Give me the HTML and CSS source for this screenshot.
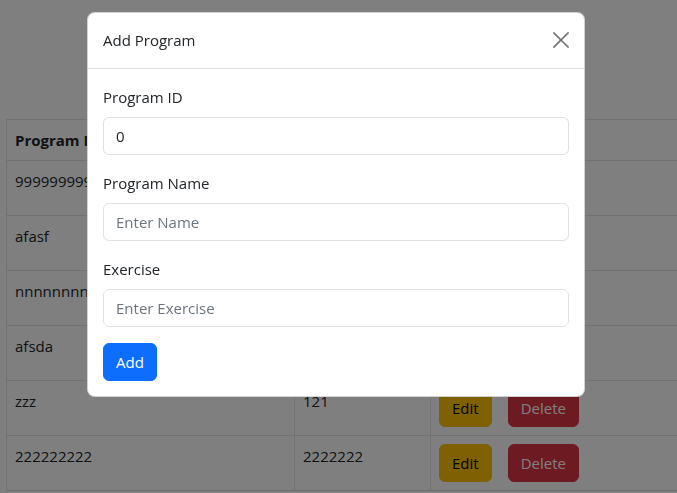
FILE: index.html
```html
<!DOCTYPE html>
<html lang="en">
<head>
<meta charset="utf-8">
<title>Programs</title>
<link rel="stylesheet" href="styles.css">
</head>
<body>
<main class="page">
  <table class="programs">
    <colgroup>
      <col class="c-name">
      <col class="c-ex">
      <col class="c-act">
    </colgroup>
    <thead>
      <tr><th>Program Name</th><th>Exercise</th><th>Actions</th></tr>
    </thead>
    <tbody>
      <tr><td>999999999</td><td>99999</td><td><div class="actions"><button class="btn btn-warning">Edit</button><button class="btn btn-danger">Delete</button></div></td></tr>
      <tr><td>afasf</td><td>asfasf</td><td><div class="actions"><button class="btn btn-warning">Edit</button><button class="btn btn-danger">Delete</button></div></td></tr>
      <tr><td>nnnnnnnnn</td><td>nnnnn</td><td><div class="actions"><button class="btn btn-warning">Edit</button><button class="btn btn-danger">Delete</button></div></td></tr>
      <tr><td>afsda</td><td>asdf</td><td><div class="actions"><button class="btn btn-warning">Edit</button><button class="btn btn-danger">Delete</button></div></td></tr>
      <tr><td>zzz</td><td>121</td><td><div class="actions"><button class="btn btn-warning">Edit</button><button class="btn btn-danger">Delete</button></div></td></tr>
      <tr><td>222222222</td><td>2222222</td><td><div class="actions"><button class="btn btn-warning">Edit</button><button class="btn btn-danger">Delete</button></div></td></tr>
    </tbody>
  </table>
</main>

<div class="backdrop"></div>

<div class="modal" role="dialog" aria-labelledby="modal-title">
  <div class="modal-header">
    <h5 class="modal-title" id="modal-title">Add Program</h5>
    <button class="btn-close" aria-label="Close">
      <svg width="16" height="16" viewBox="0 0 16 16" aria-hidden="true"><path d="M1 1 L15 15 M15 1 L1 15" stroke="currentColor" stroke-width="1.6" stroke-linecap="square" fill="none"/></svg>
    </button>
  </div>
  <form class="modal-body">
    <div class="field">
      <label class="form-label" for="pid">Program ID</label>
      <input class="form-control" id="pid" type="text" value="0">
    </div>
    <div class="field">
      <label class="form-label" for="pname">Program Name</label>
      <input class="form-control" id="pname" type="text" placeholder="Enter Name">
    </div>
    <div class="field">
      <label class="form-label" for="pex">Exercise</label>
      <input class="form-control" id="pex" type="text" placeholder="Enter Exercise">
    </div>
    <div><button type="button" class="btn btn-primary">Add</button></div>
  </form>
</div>
</body>
</html>
```

FILE: styles.css
```css
* { box-sizing: border-box; }

html, body {
  margin: 0;
  padding: 0;
  background: #fff;
  font-family: "Open Sans", "Noto Sans", sans-serif;
  font-size: 15px;
  line-height: 24px;
  color: #212529;
}

.page {
  padding: 119px 0 0 6px;
}

.programs {
  width: 671px;
  border-collapse: collapse;
  table-layout: fixed;
}

.c-name { width: 288px; }
.c-ex { width: 136px; }
.c-act { width: 247px; }

.programs th,
.programs td {
  border: 1px solid #dee2e6;
  padding: 8px;
  text-align: left;
  vertical-align: top;
  white-space: nowrap;
  overflow: hidden;
}

.programs th { font-weight: 700; }

.actions {
  display: flex;
  gap: 16px;
}

.btn {
  font-family: inherit;
  font-size: 15px;
  line-height: 24px;
  padding: 6px 12px;
  border: 1px solid transparent;
  border-radius: 6px;
  cursor: pointer;
}

.btn-warning { background: #ffc107; border-color: #ffc107; color: #000; }
.btn-danger { background: #dc3545; border-color: #dc3545; color: #fff; }
.btn-primary { background: #0d6efd; border-color: #0d6efd; color: #fff; }

.backdrop {
  position: fixed;
  inset: 0;
  background: rgba(0, 0, 0, 0.5);
}

.modal {
  position: fixed;
  top: 12px;
  left: 87px;
  width: 498px;
  background: #fff;
  border: 1px solid rgba(0, 0, 0, 0.175);
  border-radius: 8px;
}

.modal-header {
  display: flex;
  align-items: center;
  justify-content: space-between;
  padding: 15px 15px 16px 15px;
  border-bottom: 1px solid #dee2e6;
}

.modal-title {
  margin: 0;
  font-size: 15px;
  font-weight: 400;
  line-height: 24px;
}

.btn-close {
  display: flex;
  padding: 0;
  margin-right: 0;
  border: 0;
  background: transparent;
  color: #6e6e6e;
  cursor: pointer;
}

.modal-body {
  display: flex;
  flex-direction: column;
  gap: 16px;
  padding: 16px 15px 15px;
  margin: 0;
}

.field {
  display: flex;
  flex-direction: column;
}

.form-label {
  margin-bottom: 8px;
}

.form-control {
  display: block;
  width: 100%;
  height: 38px;
  padding: 6px 12px;
  font-family: inherit;
  font-size: 15px;
  line-height: 24px;
  color: #212529;
  background: #fff;
  border: 1px solid #dee2e6;
  border-radius: 6px;
}

.form-control::placeholder { color: #6c757d; opacity: 1; }
```
